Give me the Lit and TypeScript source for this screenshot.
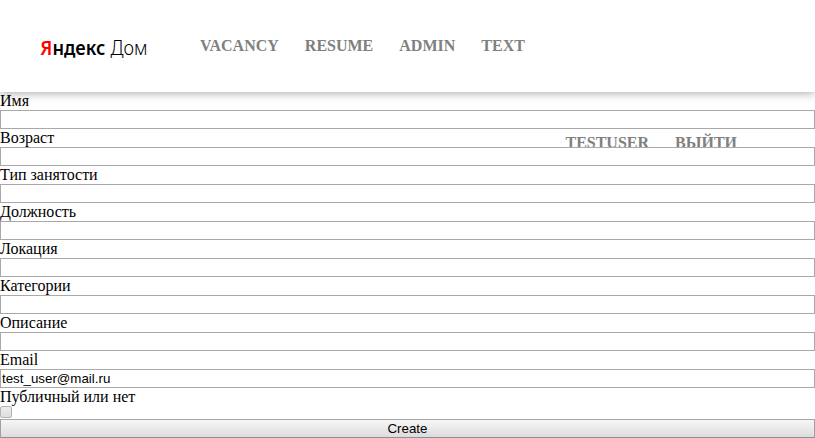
import { LitElement, html, css } from "lit";
import { customElement } from "lit/decorators.js";

interface Field {
  label: string;
  value?: string;
}

const FIELDS: Field[] = [
  { label: "Имя" },
  { label: "Возраст" },
  { label: "Тип занятости" },
  { label: "Должность" },
  { label: "Локация" },
  { label: "Категории" },
  { label: "Описание" },
  { label: "Email", value: "test_user@mail.ru" },
];

@customElement("site-header")
class SiteHeader extends LitElement {
  static styles = css`
    :host {
      display: block;
      position: relative;
      height: 92px;
      background: #fff;
      box-shadow: 0 0 10px rgba(0, 0, 0, 0.42);
    }
    .bar {
      display: flex;
      align-items: center;
      height: 92px;
      padding-left: 40px;
    }
    .logo {
      width: 110px;
      height: 40px;
      overflow: visible;
      font-family: "Noto Sans", sans-serif;
    }
    nav {
      display: flex;
      gap: 26px;
      font-size: 16px;
      line-height: 18px;
      font-weight: bold;
    }
    .main {
      margin-left: 50px;
    }
    a {
      color: #808080;
      text-decoration: none;
      text-transform: uppercase;
      white-space: nowrap;
    }
    .user {
      position: absolute;
      top: 134px;
      right: 78px;
    }
  `;
  render() {
    return html`
      <div class="bar">
        <svg class="logo" viewBox="0 0 110 40">
          <text x="0.3" y="29" font-size="20" font-weight="600" textLength="65" lengthAdjust="spacingAndGlyphs"><tspan fill="#f00">Я</tspan>ндекс</text>
          <text x="70.5" y="29" font-size="20.5" font-weight="300" textLength="37" lengthAdjust="spacingAndGlyphs">Дом</text>
        </svg>
        <nav class="main">
          <a>Vacancy</a><a>Resume</a><a>Admin</a><a>Text</a>
        </nav>
      </div>
      <nav class="user"><a>testuser</a><a>Выйти</a></nav>
    `;
  }
}

@customElement("app-root")
class AppRoot extends LitElement {
  static styles = css`
    :host {
      display: block;
      height: 438px;
      overflow: hidden;
      background: #fff;
      color: #000;
      font-family: "Liberation Serif", "Times New Roman", serif;
    }
    form {
      display: flex;
      flex-direction: column;
    }
    label {
      height: 18px;
      font-size: 16px;
      line-height: 18px;
    }
    input,
    button {
      box-sizing: border-box;
      position: relative;
      z-index: 1;
      margin: 0;
      height: 19px;
      font: 13.333px "Liberation Sans", Arial, sans-serif;
      color: #000;
      border: 1px solid #a9a9a9;
      border-radius: 0;
      outline: none;
    }
    .text {
      padding: 1px;
      background: #fff;
    }
    .check {
      appearance: none;
      width: 12px;
      height: 12px;
      margin-bottom: 1px;
      border-color: #b4b4b4;
      border-radius: 2px;
      background: linear-gradient(#ededed, #dedede);
    }
    button {
      padding: 0;
      line-height: 17px;
      border-color: #a6a6a6 #a0a0a0 #8f8f8f;
      background: linear-gradient(#f6f6f6, #dddddd);
    }
  `;
  render() {
    return html`
      <site-header></site-header>
      <form>
        ${FIELDS.map(
          (f) => html`<label>${f.label}</label><input class="text" .value=${f.value ?? ""} />`
        )}
        <label>Публичный или нет</label>
        <input class="check" type="checkbox" />
        <button type="button">Create</button>
      </form>
    `;
  }
}
